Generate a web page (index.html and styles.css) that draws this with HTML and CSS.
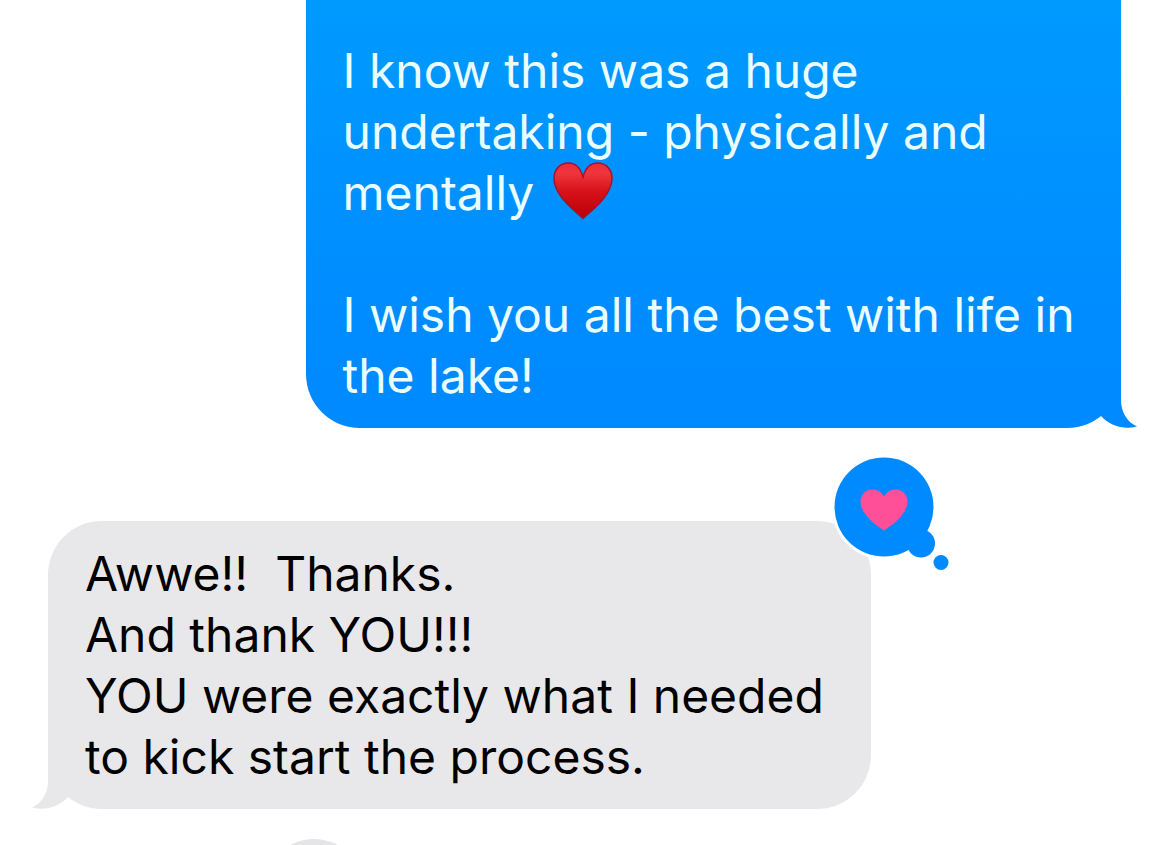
FILE: index.html
```html
<!DOCTYPE html>
<html lang="en">
<head>
    <meta charset="UTF-8">
    <meta name="viewport" content="width=device-width, initial-scale=1.0">
    <title>Messages</title>
    <link rel="stylesheet" href="styles.css">
</head>
<body>

<main class="conversation">
    <div class="message sent">
        <p>I know this was a huge undertaking - physically and mentally <svg class="emoji" viewBox="0 0 60 58" role="img" aria-label="red heart">
            <defs>
                <linearGradient id="heartFill" x1="0" y1="0" x2="0" y2="1">
                    <stop offset="0" stop-color="#f02c38"/>
                    <stop offset="0.18" stop-color="#ee363f"/>
                    <stop offset="0.5" stop-color="#d9121a"/>
                    <stop offset="1" stop-color="#b80008"/>
                </linearGradient>
            </defs>
            <path d="M30 56.500C24 50.500 16 45 9.500 36.500C4 29.500 1 23.500 1 16.500C1 7.500 7 1 15.500 1C22.500 1 27.500 6 30 15C32.500 6 37.500 1 44.500 1C53 1 59 7.500 59 16.500C59 23.500 56 29.500 50.500 36.500C44 45 36 50.500 30 56.500Z" fill="url(#heartFill)" stroke="#a5122c" stroke-width="1.500"/>
        </svg></p>
        <p>I wish you all the best with life in the lake!</p>
        <svg class="tail" viewBox="0 0 52 60" aria-hidden="true">
            <path d="M0 0H36V32C36 44 42 54 52 58.500C39 62 25 58 16 48L0 40Z"/>
        </svg>
    </div>

    <div class="message received">
        <p>Awwe!!  Thanks.</p>
        <p>And thank YOU!!!</p>
        <p>YOU were exactly what I needed to kick start the process.</p>
        <svg class="tail" viewBox="0 0 52 60" aria-hidden="true">
            <path d="M0 0H36V32C36 44 42 54 52 58.500C39 62 25 58 16 48L0 40Z"/>
        </svg>
        <svg class="tapback" viewBox="0 0 120 124" role="img" aria-label="Loved">
            <circle class="ring" cx="54" cy="54" r="52.500"/>
            <circle cx="54" cy="54" r="49.500"/>
            <circle cx="91" cy="90.500" r="14"/>
            <circle cx="111" cy="109.500" r="7.500"/>
            <path class="heart" d="M54 77.500C47 73 39 67 34.500 60C31.500 55.500 30.500 52 30.500 49C30.500 41.500 35.500 36.500 42 36.500C47.500 36.500 51.500 39 54 43.500C56.500 39 60.500 36.500 66 36.500C72.500 36.500 77.500 41.500 77.500 49C77.500 52 76.500 55.500 73.500 60C69 67 61 73 54 77.500Z"/>
        </svg>
    </div>

    <!-- reaction of the next message, cut off by the bottom edge -->
    <div class="next-message">
        <span class="next-tapback"></span>
    </div>
</main>

</body>
</html>
```

FILE: styles.css
```css
* {
    box-sizing: border-box;
}
body {
    margin: 0;
    background: #fff;
    font-family: Inter, "Liberation Sans", sans-serif;
    font-size: 48px;
    line-height: 61px;
    overflow: hidden;
}
.conversation {
    display: flex;
    flex-direction: column;
    height: 100vh;
    padding: 0 49px 0 48px;
    overflow: hidden;
}
.message {
    position: relative;
    flex-shrink: 0;
    max-width: 76.7%;
    padding: 22px 37px;
    border-radius: 54px;
}
.message p {
    margin: 0;
    white-space: pre-wrap;
}
.sent {
    align-self: flex-end;
    max-width: 76%;
    padding-top: 40px;
    border-top-left-radius: 0;
    border-top-right-radius: 0;
    background: linear-gradient(#009aff, #008aff 86%);
    color: #ecffff;
}
.sent p + p {
    margin-top: 61px;
}
.received {
    align-self: flex-start;
    margin-top: 93px;
    background: #e8e8ea;
    color: #000;
}
.emoji {
    width: 60px;
    height: 58px;
    margin: -10px 5px;
    vertical-align: 0;
}

/* Bubble tails */
.tail {
    position: absolute;
    right: -16px;
    bottom: 0;
    width: 52px;
    height: 60px;
    fill: #008aff;
}
.received .tail {
    right: auto;
    left: -16px;
    fill: #e8e8ea;
    transform: scaleX(-1);
}

/* Reactions */
.tapback {
    position: absolute;
    top: -68px;
    right: -79px;
    width: 120px;
    height: 124px;
    fill: #008aff;
}
.tapback .ring {
    fill: #fff;
}
.tapback .heart {
    fill: #ff4f98;
}
.next-message {
    flex-shrink: 0;
    margin-top: 30px;
    padding-left: 216px;
}
.next-tapback {
    display: block;
    width: 100px;
    height: 100px;
    border-radius: 50%;
    background: #e5e5e7;
}
```
